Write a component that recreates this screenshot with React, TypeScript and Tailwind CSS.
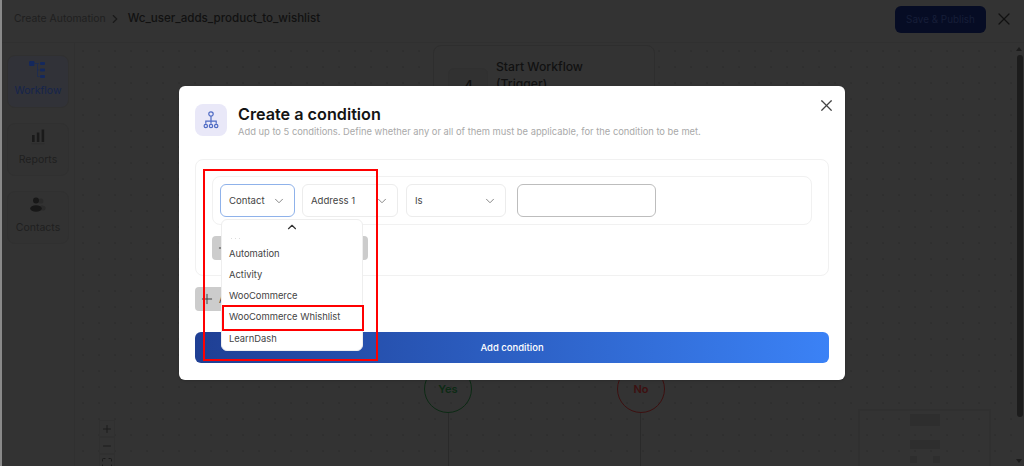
import type { ReactNode } from "react";
import { ChevronDown, ChevronRight, ChevronUp, Maximize, Minus, Plus, X } from "lucide-react";

const menuItems = ["Automation", "Activity", "WooCommerce", "WooCommerce Whishlist", "LearnDash"];

function SideItem({ label, active, children }: { label: string; active?: boolean; children: ReactNode }) {
  return (
    <div
      className={`flex h-[53px] flex-col items-center justify-center gap-[3px] rounded-lg border border-[#303030] pb-[3px] ${
        active ? "bg-[#313238]" : "bg-[#323232]"
      }`}
    >
      {children}
      <span className={`text-[10.5px] leading-4 ${active ? "text-[#15244c]" : "text-[#1f1f1f]"}`}>{label}</span>
    </div>
  );
}

function WorkflowIcon() {
  return (
    <svg width="18" height="19" viewBox="0 0 18 19" fill="#14285c">
      <rect x="0" y="0" width="5.5" height="5" rx="1.2" />
      <rect x="11" y="1" width="5" height="3" rx="1" />
      <rect x="11" y="7.5" width="5" height="3" rx="1" />
      <rect x="11" y="14" width="5" height="3" rx="1" />
      <path d="M6 2.5h4M8.5 3v12.5h2M8.5 9h2" stroke="#14285c" strokeWidth="0.6" fill="none" />
    </svg>
  );
}

function ReportsIcon() {
  return (
    <svg width="16" height="20" viewBox="0 0 16 20" fill="#1a1a1a">
      <rect x="2" y="6" width="2.6" height="7" />
      <rect x="6.8" y="3.5" width="2.6" height="9.5" />
      <rect x="11.6" y="0.5" width="2.6" height="12.5" />
      <rect x="1.5" y="14.5" width="13" height="0.6" fill="#2a2a2a" />
    </svg>
  );
}

function ContactsIcon() {
  return (
    <svg width="16" height="20" viewBox="0 0 16 20">
      <circle cx="10.8" cy="4" r="2.6" fill="#2a2a2a" />
      <ellipse cx="12" cy="11" rx="3.6" ry="2.6" fill="#2a2a2a" />
      <circle cx="6" cy="3.6" r="3" fill="#181818" />
      <ellipse cx="6" cy="11.5" rx="5.8" ry="3.2" fill="#181818" />
    </svg>
  );
}

function ConditionIcon() {
  return (
    <svg width="18" height="18" viewBox="0 0 18 18" fill="none" stroke="#4f6bc4" strokeWidth="1.2">
      <circle cx="9" cy="3" r="2.2" />
      <path d="M9 5.2v7.6M3.8 12.8v-2.6h10.4v2.6" />
      <circle cx="3.8" cy="15" r="1.7" />
      <circle cx="9" cy="15" r="1.7" />
      <circle cx="14.2" cy="15" r="1.7" />
    </svg>
  );
}

function Select({ label, className }: { label: string; className: string }) {
  return (
    <div className={`flex h-[33px] items-center justify-between rounded-md bg-white pl-2 pr-2 text-[9.6px] text-[#444] ${className}`}>
      <span className="pt-[1px]">{label}</span>
      <ChevronDown className="size-3.5 text-[#777]" strokeWidth={1.5} />
    </div>
  );
}

export default function App() {
  return (
    <div className="relative h-[466px] w-[1024px] overflow-hidden border-l-2 border-[#8a8a8a] bg-[#333333] font-['Inter',sans-serif]">
      <header className="flex h-[43px] items-center border-b border-[#303030] pb-[4px] pl-3 pr-[10px]">
        <span className="text-[10.4px] text-[#1f1f1f]">Create Automation</span>
        <ChevronRight className="ml-[2px] mr-[6px] size-3.5 text-[#1a1a1a]" />
        <span className="text-[11.6px] font-medium text-[#111]">Wc_user_adds_product_to_wishlist</span>
        <button className="ml-auto h-[27px] w-[91px] rounded-md bg-[#060c24] text-[9.9px] text-[#161e38]">Save &amp; Publish</button>
        <X className="ml-2 size-5 text-[#111]" strokeWidth={1.5} />
      </header>

      <div className="flex h-[423px]">
        <aside className="flex w-[73px] shrink-0 flex-col gap-[15px] border-r border-[#303030] pl-[5px] pr-[5px] pt-3">
          <SideItem label="Workflow" active>
            <WorkflowIcon />
          </SideItem>
          <SideItem label="Reports">
            <ReportsIcon />
          </SideItem>
          <SideItem label="Contacts">
            <ContactsIcon />
          </SideItem>
        </aside>
        <main className="relative flex-1 bg-[radial-gradient(#2e2e2e_0.7px,transparent_0.8px)] bg-[size:16px_16px]">
          <div className="absolute left-[358px] top-[2px] flex h-[90px] w-[222px] gap-2 rounded-lg border border-[#2e2e2e] bg-[#333333] pl-[14px] pt-3">
            <div className="mt-[10px] flex size-10 items-center justify-center rounded-md border border-[#303030] bg-[#313131] text-lg text-[#111]">
              4
            </div>
            <div className="text-[12.2px] font-medium leading-[17px] text-[#111]">
              Start Workflow
              <br />
              (Trigger)
            </div>
          </div>

          <div className="absolute left-[349px] top-[322px] flex size-12 items-center justify-center rounded-full border border-[#0c2a14] text-[11px] font-semibold text-[#0c2a14]">
            Yes
          </div>
          <div className="absolute left-[373px] top-[370px] h-[60px] w-px bg-[#2a2a2a]" />
          <div className="absolute left-[542px] top-[322px] flex size-12 items-center justify-center rounded-full border border-[#3d1010] text-[11px] font-semibold text-[#3d1010]">
            No
          </div>
          <div className="absolute left-[565px] top-[370px] h-[60px] w-px bg-[#2a2a2a]" />

          <div className="absolute left-[24px] top-[377px] flex w-4 flex-col text-[#1c1c1c]">
            <div className="flex h-[17px] items-center justify-center border border-[#303030]">
              <Plus className="size-3" />
            </div>
            <div className="flex h-[17px] items-center justify-center border border-[#303030]">
              <Minus className="size-3" />
            </div>
            <div className="flex h-[18px] items-center justify-center border border-[#303030]">
              <Maximize className="size-3" />
            </div>
          </div>

          <div className="absolute left-[783px] top-[366px] flex h-[70px] w-[133px] flex-col items-center border-2 border-[#303030] pt-[3px]">
            <div className="h-3 w-[30px] bg-[#2e2e2e]" />
            <div className="mt-[14px] h-[9px] w-[30px] bg-[#2e2e2e]" />
            <div className="mt-[7px] flex w-[30px] justify-between">
              <div className="size-[7px] bg-[#2e2e2e]" />
              <div className="size-[7px] bg-[#2e2e2e]" />
            </div>
          </div>

          <div className="absolute right-[2px] top-[4px] size-0 border-x-[3px] border-b-[4px] border-x-transparent border-b-[#1c1c1c]" />
          <div className="absolute right-[1px] top-[12px] h-[362px] w-[6px] rounded-full bg-[#1c1c1c]" />
          <div className="absolute bottom-[3px] right-[2px] size-0 border-x-[3px] border-t-[4px] border-x-transparent border-t-[#1c1c1c]" />
        </main>
      </div>

      <div className="absolute left-[177px] top-[86px] h-[294px] w-[666px] rounded-md bg-white p-4 pt-[18px] shadow">
        <X className="absolute right-[9px] top-[10px] size-[19px] text-[#444]" strokeWidth={1.5} />
        <div className="flex gap-[11px]">
          <div className="flex size-8 items-center justify-center rounded-lg bg-[#e9e8f8]">
            <ConditionIcon />
          </div>
          <div>
            <h2 className="text-[16.2px] font-semibold leading-5 text-[#141414]">Create a condition</h2>
            <p className="mt-[1px] text-[9.35px] leading-[14px] text-[#a9a9a9]">
              Add up to 5 conditions. Define whether any or all of them must be applicable, for the condition to be met.
            </p>
          </div>
        </div>

        <div className="mt-5 h-[117px] rounded-lg border border-[#f1f1f1] p-4">
          <div className="flex h-[49px] items-center gap-[7px] rounded-lg border border-[#f1f1f1] pl-[7px]">
            <Select label="Contact" className="w-[75px] border-[1.5px] border-[#8fb2ea]" />
            <Select label="Address 1" className="w-[96px] border border-[#ececec]" />
            <Select label="Is" className="ml-[1px] w-[100px] border border-[#ececec]" />
            <div className="ml-[4px] h-[33px] w-[139px] rounded-md border border-[#bdbdbd]" />
          </div>
          <div className="mt-[11px] flex h-6 w-[156px] items-center rounded bg-[#cccccc] pl-1 text-[#444]">
            <Plus className="size-4" strokeWidth={1.5} />
          </div>
        </div>

        <div className="mt-[11px] flex h-6 w-[80px] items-center gap-1 rounded bg-[#cccccc] pl-1 text-[10px] text-[#444]">
          <Plus className="size-4" strokeWidth={1.5} />A
        </div>

        <button className="mt-[21px] h-[31px] w-full rounded-md bg-gradient-to-r from-[#1f3f94] to-[#3b82f6] pt-[2px] text-[9.5px] font-medium text-white">
          Add condition
        </button>
      </div>

      <div className="absolute left-[219px] top-[219px] h-[132px] w-[142px] overflow-hidden rounded-md border border-[#eeeeee] bg-white text-[9.4px] text-[#444]">
        <ChevronUp className="mx-auto size-3.5 text-[#333]" />
        <div className="flex h-[8px] items-center gap-[3px] pl-[9px]">
          <span className="size-px bg-[#dddddd]" />
          <span className="size-px bg-[#dddddd]" />
          <span className="size-px bg-[#dddddd]" />
        </div>
        <ul className="mt-[1px]">
          {menuItems.map((item) => (
            <li key={item} className="flex h-[21.3px] items-center pl-[7px]">
              {item}
            </li>
          ))}
        </ul>
      </div>

      <div className="absolute left-[201px] top-[169px] h-[192px] w-[175px] border-2 border-[#ff0000]" />
      <div className="absolute left-[220px] top-[305px] h-[26px] w-[142px] border-2 border-[#ff0000]" />
    </div>
  );
}
